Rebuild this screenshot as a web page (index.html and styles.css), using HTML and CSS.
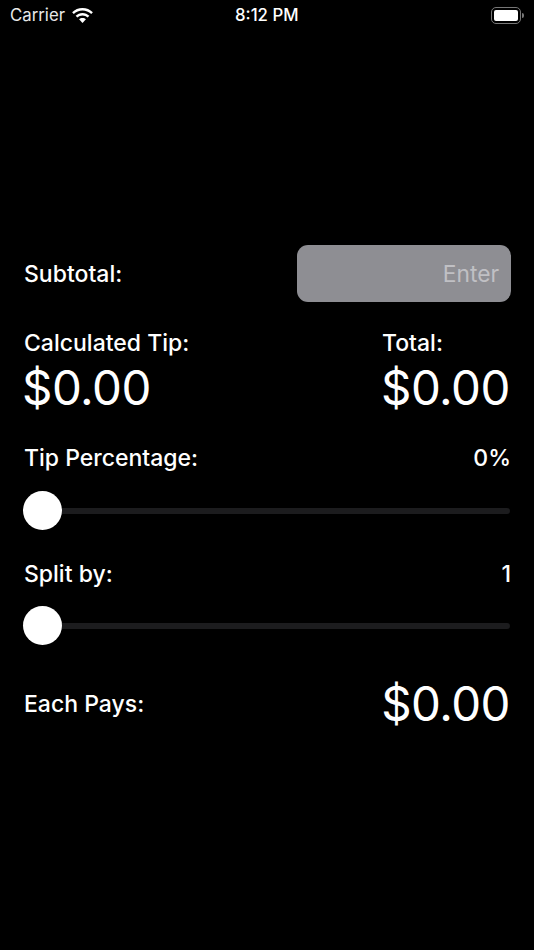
FILE: index.html
```html
<!DOCTYPE html>
<html lang="en">
<head>
    <meta charset="UTF-8">
    <title>Tip Calculator</title>
    <link rel="stylesheet" href="styles.css">
</head>
<body>
<div class="statusBar">
    <div class="statusLeft">
        <span>Carrier</span>
        <svg class="wifi" width="21" height="15" viewBox="1.600 .9 18.800 13.600">
            <path d="M11 3.200c3 0 5.800 1.100 7.900 3.100l1.500-1.600C17.900 2.300 14.600.9 11 .9S4.100 2.300 1.600 4.700l1.500 1.600C5.200 4.300 8 3.200 11 3.200z" fill="#fff"/>
            <path d="M11 7.700c1.800 0 3.400.7 4.700 1.800l1.500-1.600C15.500 6.400 13.400 5.400 11 5.400S6.500 6.400 4.800 7.900l1.500 1.600C7.600 8.400 9.200 7.700 11 7.700z" fill="#fff"/>
            <path d="M11 9.900c-1.200 0-2.300.5-3.100 1.200L11 14.500l3.100-3.400C13.300 10.400 12.200 9.900 11 9.900z" fill="#fff"/>
        </svg>
    </div>
    <div class="statusTime">8:12 PM</div>
    <div class="statusRight">
        <div class="battery"><div class="batteryFill"></div></div>
        <div class="batteryCap"></div>
    </div>
</div>

<div class="main">
    <div class="row subtotalRow">
        <span class="label">Subtotal:</span>
        <div class="enterBox">Enter</div>
    </div>

    <div class="row amountsRow">
        <div class="tipColumn">
            <div class="label">Calculated Tip:</div>
            <div class="amount">$0.00</div>
        </div>
        <div class="totalColumn">
            <div class="label">Total:</div>
            <div class="amount">$0.00</div>
        </div>
    </div>

    <div class="row percentRow">
        <span class="label">Tip Percentage:</span>
        <span class="label">0%</span>
    </div>
    <div class="slider percentSlider">
        <div class="knob"></div>
        <div class="track"></div>
    </div>

    <div class="row splitRow">
        <span class="label">Split by:</span>
        <span class="label">1</span>
    </div>
    <div class="slider splitSlider">
        <div class="knob"></div>
        <div class="track"></div>
    </div>

    <div class="row eachRow">
        <span class="label">Each Pays:</span>
        <span class="amount">$0.00</span>
    </div>
</div>
</body>
</html>
```

FILE: styles.css
```css
*{ padding: 0; margin: 0; box-sizing: border-box;}
body{ width: 534px; height: 950px; background: #000; color: #fff; font-family: "Inter", "Liberation Sans", sans-serif; overflow: hidden;}

.statusBar{ height: 30px; display: flex; align-items: center; justify-content: space-between; padding: 0 10px; position: relative;}
.statusLeft{ display: flex; align-items: center; gap: 7px; font-size: 16.800px; color: #e8e8e8;}
.statusTime{ position: absolute; left: 235px; top: 6px; font-size: 16.800px; font-weight: 500; line-height: 18px;}
.statusRight{ display: flex; align-items: center; gap: 1px;}
.battery{ width: 30px; height: 17px; border: 1px solid #777; border-radius: 5px; padding: 2px;}
.batteryFill{ width: 100%; height: 100%; background: #fff; border-radius: 2px;}
.batteryCap{ width: 2px; height: 5px; background: #777; border-radius: 0 2px 2px 0;}

.main{ padding: 215px 23px 0 24px;}
.row{ display: flex; justify-content: space-between;}
.label{ font-size: 23px; font-weight: 550; line-height: 28px;}
.amount{ font-size: 47.400px; font-weight: 400; line-height: 56px; letter-spacing: -0.500px;}

.subtotalRow{ height: 57px; align-items: center;}
.enterBox{ width: 214px; height: 57px; background: #8e8e93; border-radius: 11px; color: #c0c0c4; font-size: 22.800px; line-height: 57px; text-align: right; padding-right: 12px;}

.amountsRow{ margin-top: 27px;}
.totalColumn{ width: 129px;}
.amountsRow .amount{ margin-top: 3px; margin-left: -2px;}
.totalColumn .amount{ margin-left: -1px;}

.percentRow{ margin-top: 28px;}
.splitRow{ margin-top: 30px;}

.slider{ display: flex; align-items: center; height: 40px;}
.percentSlider{ margin-top: 18px;}
.splitSlider{ margin-top: 17px;}
.knob{ width: 39px; height: 39px; border-radius: 50%; background: #fff; margin-left: -1px;}
.track{ flex: 1; height: 6px; background: #1c1c1e; border-radius: 0 3px 3px 0; margin: 2px 1px 0 0;}

.eachRow{ margin-top: 31px; align-items: center; height: 56px;}
.eachRow .amount{ margin-right: 1px;}
```
